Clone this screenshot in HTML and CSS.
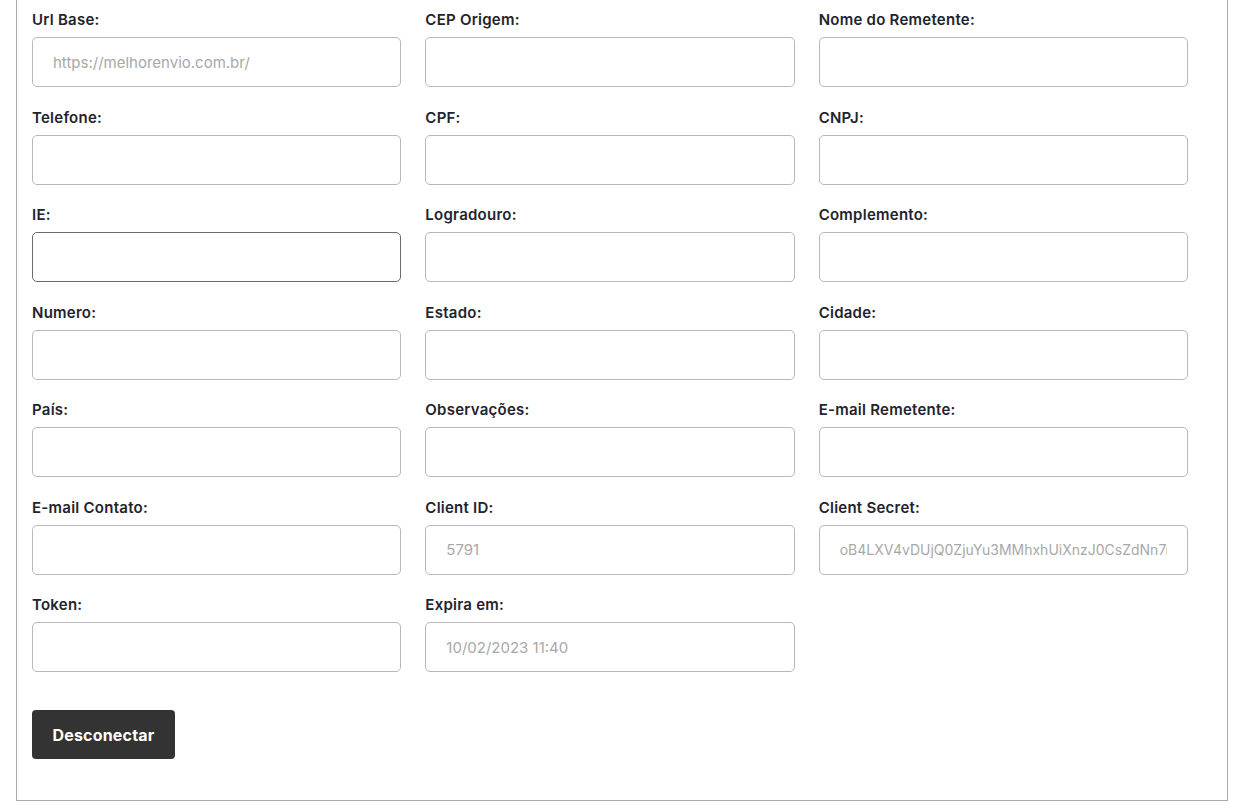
FILE: index.html
```html
<!doctype html>
<html lang="pt-BR">
  <head>
    <meta charset="UTF-8" />
    <meta name="viewport" content="width=device-width, initial-scale=1.0" />
    <title>Melhor Envio - Configuração</title>
    <link rel="stylesheet" href="styles.css">
  </head>
  <body>
    <div class="panel">
      <form class="settings-form">
        <div class="field-grid">
          <div class="field">
            <label for="urlBase">Url Base:</label>
            <input id="urlBase" type="text" placeholder="https://melhorenvio.com.br/" />
          </div>
          <div class="field">
            <label for="cepOrigem">CEP Origem:</label>
            <input id="cepOrigem" type="text" />
          </div>
          <div class="field">
            <label for="nomeRemetente">Nome do Remetente:</label>
            <input id="nomeRemetente" type="text" />
          </div>

          <div class="field">
            <label for="telefone">Telefone:</label>
            <input id="telefone" type="text" />
          </div>
          <div class="field">
            <label for="cpf">CPF:</label>
            <input id="cpf" type="text" />
          </div>
          <div class="field">
            <label for="cnpj">CNPJ:</label>
            <input id="cnpj" type="text" />
          </div>

          <div class="field">
            <label for="ie">IE:</label>
            <input id="ie" type="text" class="active" />
          </div>
          <div class="field">
            <label for="logradouro">Logradouro:</label>
            <input id="logradouro" type="text" />
          </div>
          <div class="field">
            <label for="complemento">Complemento:</label>
            <input id="complemento" type="text" />
          </div>

          <div class="field">
            <label for="numero">Numero:</label>
            <input id="numero" type="text" />
          </div>
          <div class="field">
            <label for="estado">Estado:</label>
            <input id="estado" type="text" />
          </div>
          <div class="field">
            <label for="cidade">Cidade:</label>
            <input id="cidade" type="text" />
          </div>

          <div class="field">
            <label for="pais">País:</label>
            <input id="pais" type="text" />
          </div>
          <div class="field">
            <label for="observacoes">Observações:</label>
            <input id="observacoes" type="text" />
          </div>
          <div class="field">
            <label for="emailRemetente">E-mail Remetente:</label>
            <input id="emailRemetente" type="text" />
          </div>

          <div class="field">
            <label for="emailContato">E-mail Contato:</label>
            <input id="emailContato" type="text" />
          </div>
          <div class="field">
            <label for="clientId">Client ID:</label>
            <input id="clientId" type="text" value="5791" readonly />
          </div>
          <div class="field">
            <label for="clientSecret">Client Secret:</label>
            <input id="clientSecret" type="text" class="secret" value="oB4LXV4vDUjQ0ZjuYu3MMhxhUiXnzJ0CsZdNn7ryQkPw" readonly />
          </div>

          <div class="field">
            <label for="token">Token:</label>
            <input id="token" type="text" />
          </div>
          <div class="field">
            <label for="expiraEm">Expira em:</label>
            <input id="expiraEm" type="text" value="10/02/2023 11:40" readonly />
          </div>
        </div>

        <button type="button" class="btn">Desconectar</button>
      </form>
    </div>
  </body>
</html>
```

FILE: styles.css
```css
body {
  margin: 0;
  font-family: Inter, "Open Sans", Arial, sans-serif;
  background: #fff;
  color: #23232d;
}
.panel {
  width: 1212px;
  margin-left: 16px;
  box-sizing: border-box;
  border: 1px solid #aaa;
  border-top: none;
}
.settings-form {
  padding: 9px 39px 41px 15px;
}
.field-grid {
  display: grid;
  grid-template-columns: repeat(3, 1fr);
  column-gap: 24px;
  row-gap: 19.5px;
}
.field label {
  display: block;
  font-size: 15px;
  font-weight: 600;
  letter-spacing: 0.25px;
  line-height: 22px;
  margin-bottom: 6px;
  color: #23232d;
}
.field input {
  display: block;
  width: 100%;
  height: 50px;
  box-sizing: border-box;
  border: 1px solid #b8b8b8;
  border-radius: 5px;
  padding: 0 20px;
  font-family: inherit;
  font-size: 15px;
  color: #a8a8a8;
  background: #fff;
  outline: none;
}
.field input::placeholder {
  color: #a8a8a8;
}
.field input.active {
  border-color: #6b6b6b;
}
.field input.secret {
  font-size: 14px;
}
.btn {
  margin-top: 38px;
  width: 143px;
  height: 49px;
  background: #333;
  color: #fff;
  border: none;
  border-radius: 4px;
  padding: 0;
  font-family: inherit;
  font-size: 16px;
  font-weight: 700;
  letter-spacing: 0.2px;
  cursor: pointer;
}
```
